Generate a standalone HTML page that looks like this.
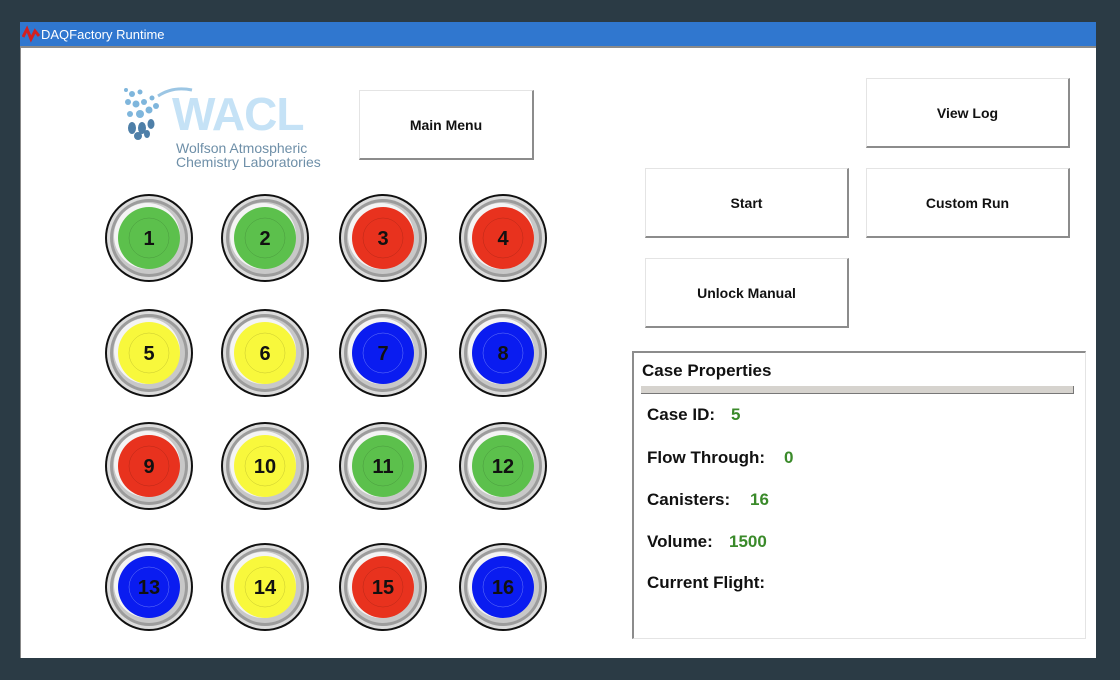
<!DOCTYPE html>
<html><head><style>
body{margin:0;width:1120px;height:680px;background:#2b3b45;position:relative;overflow:hidden;font-family:"Liberation Sans",Arial,sans-serif}
.title{position:absolute;left:20px;top:22px;width:1076px;height:24px;background:#3077cf;color:#fff;font-size:13px;line-height:26px}
.win{position:absolute;left:20px;top:46px;width:1076px;height:612px;background:#fff;border-top:2px solid #8a8a8a;box-sizing:border-box;border-left:1px solid #888}
.btn{position:absolute;background:#fff;border-top:1px solid #e4e4e4;border-left:1px solid #e4e4e4;border-right:2px solid #8c8c8c;border-bottom:2px solid #8c8c8c;box-sizing:border-box;display:flex;align-items:center;justify-content:center;font-weight:bold;font-size:14px;color:#111}
.panel{position:absolute;left:632px;top:351px;width:454px;height:288px;border:1px solid #e4e4e4;border-top:2px solid #8c8c8c;border-left:2px solid #8c8c8c;box-sizing:border-box}
.row{position:absolute;left:13px;font-weight:bold;font-size:17px;color:#111}
.row span{color:#3a8a2a}
</style></head><body>
<div class="title"><svg width="18" height="18" style="position:absolute;left:2px;top:3px" viewBox="0 0 18 18"><path d="M1 12 L5 4 L9 14 L13 6 L17 11" stroke="#d42020" stroke-width="3" fill="none"/></svg><span style="position:absolute;left:21px">DAQFactory Runtime</span></div>
<div class="win"></div>
<svg style="position:absolute;left:118px;top:82px" width="80" height="62" viewBox="0 0 80 62">
<g fill="#7fb6dc"><circle cx="8" cy="8" r="2"/><circle cx="14" cy="12" r="3"/><circle cx="22" cy="10" r="2.5"/><circle cx="10" cy="20" r="3"/><circle cx="18" cy="22" r="3.5"/><circle cx="26" cy="20" r="3"/><circle cx="34" cy="16" r="2.5"/><circle cx="12" cy="32" r="3"/><circle cx="22" cy="32" r="4"/><circle cx="31" cy="28" r="3.5"/><circle cx="38" cy="24" r="3"/></g>
<g fill="#4e7fa8"><ellipse cx="14" cy="46" rx="4" ry="6"/><ellipse cx="24" cy="46" rx="4" ry="6"/><ellipse cx="33" cy="42" rx="3.5" ry="5"/><ellipse cx="20" cy="54" rx="4" ry="4"/><ellipse cx="29" cy="52" rx="3" ry="4"/></g>
<path d="M40 14 Q55 4 74 8" stroke="#9cc6e4" stroke-width="3" fill="none"/>
</svg>
<div style="position:absolute;left:172px;top:90px;font-size:46px;font-weight:bold;color:#c5e2f6;letter-spacing:-1px;line-height:48px">WACL</div>
<div style="position:absolute;left:176px;top:141px;font-size:14px;color:#6e8fa8;line-height:14px">Wolfson Atmospheric<br>Chemistry Laboratories</div>
<div class="btn" style="left:359px;top:90px;width:175px;height:70px">Main Menu</div>
<div class="btn" style="left:866px;top:78px;width:204px;height:70px">View Log</div>
<div class="btn" style="left:645px;top:168px;width:204px;height:70px">Start</div>
<div class="btn" style="left:866px;top:168px;width:204px;height:70px">Custom Run</div>
<div class="btn" style="left:645px;top:258px;width:204px;height:70px">Unlock Manual</div>
<svg style="position:absolute;left:0;top:0" width="600" height="680">
<defs><g id="c"><circle r="44" fill="#111"/><circle r="42" fill="#dcdcdc"/><circle r="39" fill="#9c9c9c"/><circle r="36" fill="#c8c8c8"/><circle cx="-2" cy="-2" r="33" fill="#f4f4f4"/></g></defs>
<g font-family="Liberation Sans,Arial,sans-serif" font-weight="bold" font-size="20" text-anchor="middle" fill="#111">
<g transform="translate(149,238)"><use href="#c"/><circle r="31" fill="#5cc04c"/><circle r="20" fill="none" stroke="#4a9a3e" stroke-width=".5"/><text y="7">1</text></g>
<g transform="translate(265,238)"><use href="#c"/><circle r="31" fill="#5cc04c"/><circle r="20" fill="none" stroke="#4a9a3e" stroke-width=".5"/><text y="7">2</text></g>
<g transform="translate(383,238)"><use href="#c"/><circle r="31" fill="#e8321e"/><circle r="20" fill="none" stroke="#b82818" stroke-width=".5"/><text y="7">3</text></g>
<g transform="translate(503,238)"><use href="#c"/><circle r="31" fill="#e8321e"/><circle r="20" fill="none" stroke="#b82818" stroke-width=".5"/><text y="7">4</text></g>
<g transform="translate(149,353)"><use href="#c"/><circle r="31" fill="#f8f83c"/><circle r="20" fill="none" stroke="#c8c830" stroke-width=".5"/><text y="7">5</text></g>
<g transform="translate(265,353)"><use href="#c"/><circle r="31" fill="#f8f83c"/><circle r="20" fill="none" stroke="#c8c830" stroke-width=".5"/><text y="7">6</text></g>
<g transform="translate(383,353)"><use href="#c"/><circle r="31" fill="#0a1cf0"/><circle r="20" fill="none" stroke="#6a7af8" stroke-width=".5"/><text y="7">7</text></g>
<g transform="translate(503,353)"><use href="#c"/><circle r="31" fill="#0a1cf0"/><circle r="20" fill="none" stroke="#6a7af8" stroke-width=".5"/><text y="7">8</text></g>
<g transform="translate(149,466)"><use href="#c"/><circle r="31" fill="#e8321e"/><circle r="20" fill="none" stroke="#b82818" stroke-width=".5"/><text y="7">9</text></g>
<g transform="translate(265,466)"><use href="#c"/><circle r="31" fill="#f8f83c"/><circle r="20" fill="none" stroke="#c8c830" stroke-width=".5"/><text y="7">10</text></g>
<g transform="translate(383,466)"><use href="#c"/><circle r="31" fill="#5cc04c"/><circle r="20" fill="none" stroke="#4a9a3e" stroke-width=".5"/><text y="7">11</text></g>
<g transform="translate(503,466)"><use href="#c"/><circle r="31" fill="#5cc04c"/><circle r="20" fill="none" stroke="#4a9a3e" stroke-width=".5"/><text y="7">12</text></g>
<g transform="translate(149,587)"><use href="#c"/><circle r="31" fill="#0a1cf0"/><circle r="20" fill="none" stroke="#6a7af8" stroke-width=".5"/><text y="7">13</text></g>
<g transform="translate(265,587)"><use href="#c"/><circle r="31" fill="#f8f83c"/><circle r="20" fill="none" stroke="#c8c830" stroke-width=".5"/><text y="7">14</text></g>
<g transform="translate(383,587)"><use href="#c"/><circle r="31" fill="#e8321e"/><circle r="20" fill="none" stroke="#b82818" stroke-width=".5"/><text y="7">15</text></g>
<g transform="translate(503,587)"><use href="#c"/><circle r="31" fill="#0a1cf0"/><circle r="20" fill="none" stroke="#6a7af8" stroke-width=".5"/><text y="7">16</text></g>
</g></svg>
<div class="panel">
<div style="position:absolute;left:8px;top:8px;font-weight:bold;font-size:17px;color:#111">Case Properties</div>
<div style="position:absolute;left:7px;top:33px;width:433px;height:8px;background:#d6d3ce;border-right:1px solid #777;border-bottom:1px solid #777;box-sizing:border-box"></div>
<div class="row" style="top:52px">Case ID:<span style="position:absolute;left:84px">5</span></div>
<div class="row" style="top:95px;width:200px">Flow Through:<span style="position:absolute;left:137px">0</span></div>
<div class="row" style="top:137px;width:200px">Canisters:<span style="position:absolute;left:103px">16</span></div>
<div class="row" style="top:179px;width:200px">Volume:<span style="position:absolute;left:82px">1500</span></div>
<div class="row" style="top:220px">Current Flight:</div>
</div>
</body></html>
